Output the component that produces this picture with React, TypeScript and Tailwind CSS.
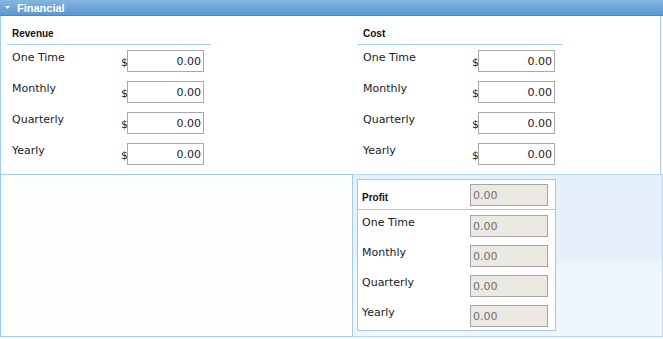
import React from "react";

const rows = ["One Time", "Monthly", "Quarterly", "Yearly"];

function MoneyColumn({ title }: { title: string }) {
	return (
		<div className="w-[204px]">
			<div className="h-[29px] border-b border-[#a3cbe9] pl-[5px] pt-[12px] font-['Liberation_Sans',sans-serif] font-bold text-[10px] leading-[12px] text-[#111]">
				{title}
			</div>
			{rows.map((r) => (
				<div key={r} className="h-[31px] flex">
					<div className="w-[114px] pl-[5px] pt-[6px] leading-[13px]">{r}</div>
					<div className="flex items-end h-[27px]">
						<span className="w-[6px] leading-[13px] pb-[3px]">$</span>
						<input
							readOnly
							value="0.00"
							className="w-[77px] h-[22px] border border-[#a9a9a9] bg-white text-right pr-[2px] text-[11px] text-[#222] outline-none"
						/>
					</div>
				</div>
			))}
		</div>
	);
}

export default function App() {
	return (
		<div className="w-[663px] h-[339px] bg-white font-['DejaVu_Sans',sans-serif] text-[11px] text-[#222]">
			<div className="h-[16px] flex items-center bg-[linear-gradient(#84b6e3,#5c98d0)] border-b border-[#4a86c2] text-white">
				<svg width="17" height="15" viewBox="0 0 17 15" className="shrink-0">
					<path d="M5 6h5l-2.5 3z" fill="#fff" />
				</svg>
				<span className="font-['Liberation_Sans',sans-serif] font-bold text-[11px] leading-[14px]">Financial</span>
			</div>
			<div className="w-[661px] h-[158px] border-l border-r border-[#a8cbe8] grid grid-cols-[351px_1fr] pl-[6px]">
				<MoneyColumn title="Revenue" />
				<MoneyColumn title="Cost" />
			</div>
			<div className="flex h-[163px]">
				<div className="w-[353px] border border-[#a4cbe9] bg-[#fcfdfd]" />
				<div className="w-[310px] border-t border-r border-b border-[#bcd6ee] bg-[linear-gradient(#e6f0fa_0%,#e6f0fa_50%,#eff6fd_58%,#eff6fd_100%)] pl-[4px] pt-[4px]">
					<div className="w-[199px] h-[152px] border border-[#a8cae6] bg-white">
						<div className="h-[30px] border-b border-[#a8cae6] flex">
							<div className="w-[112px] pl-[4px] pt-[12px] font-['Liberation_Sans',sans-serif] font-bold text-[10px] leading-[12px] text-[#111]">
								Profit
							</div>
							<input
								readOnly
								value="0.00"
								className="mt-[4px] w-[78px] h-[22px] border border-[#a5a5a5] bg-[#ece9e2] pl-[2px] text-[11px] text-[#707070] outline-none"
							/>
						</div>
						{rows.map((r) => (
							<div key={r} className="h-[30px] flex">
								<div className="w-[112px] pl-[4px] pt-[6px] leading-[13px]">{r}</div>
								<input
									readOnly
									value="0.00"
									className="mt-[5px] w-[78px] h-[22px] border border-[#a5a5a5] bg-[#ece9e2] pl-[2px] text-[11px] text-[#707070] outline-none"
								/>
							</div>
						))}
					</div>
				</div>
			</div>
		</div>
	);
}
